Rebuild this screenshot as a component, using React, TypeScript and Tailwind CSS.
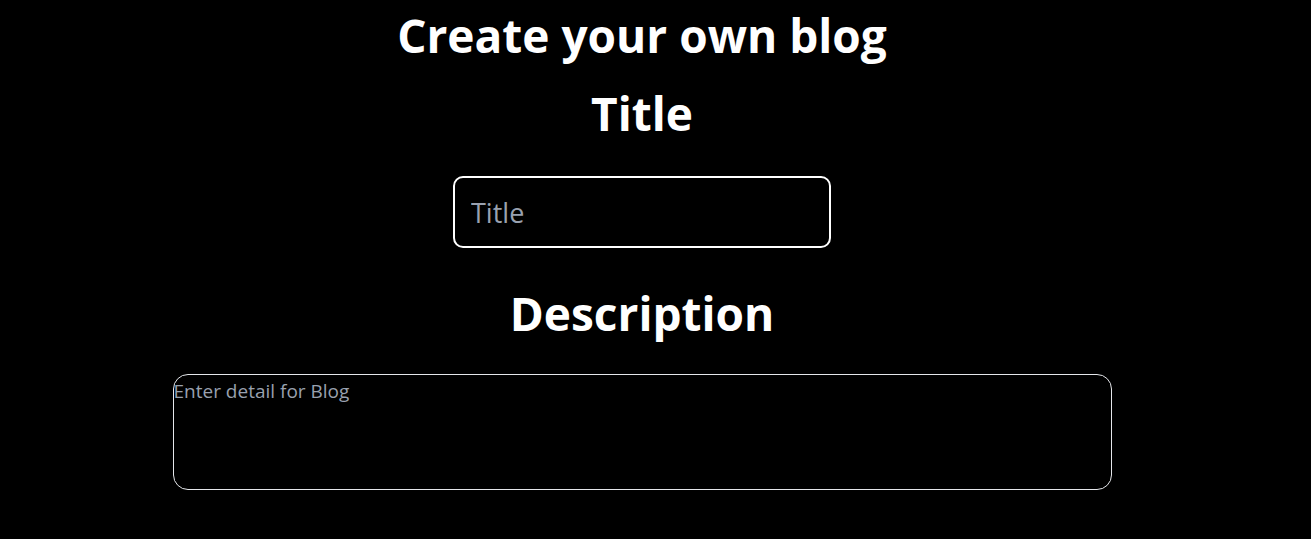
export default function App() {
  return (
    <div className="min-h-[539px] w-full bg-black text-white" style={{ fontFamily: '"Open Sans", "Noto Sans", sans-serif' }}>
      <div className="flex w-[1284px] flex-col items-center">
        <h1 className="mt-[3px] text-[46px] font-bold leading-[64px]">Create your own blog</h1>
        <h2 className="mt-[14px] text-[46px] font-bold leading-[64px]">Title</h2>
        <input
          placeholder="Title"
          className="mt-[31px] h-[72px] w-[378px] rounded-[10px] border-2 border-white bg-black px-[16px] text-[27px] text-white outline-none placeholder:text-gray-400"
        />
        <h2 className="mt-[33px] text-[46px] font-bold leading-[64px]">Description</h2>
        <textarea
          placeholder="Enter detail for Blog"
          className="mt-[29px] h-[116px] w-[939px] resize-none rounded-[15px] border border-gray-200 bg-black p-0 pt-[1px] text-[19px] leading-[30px] text-white outline-none placeholder:text-gray-400"
        />
      </div>
    </div>
  );
}
